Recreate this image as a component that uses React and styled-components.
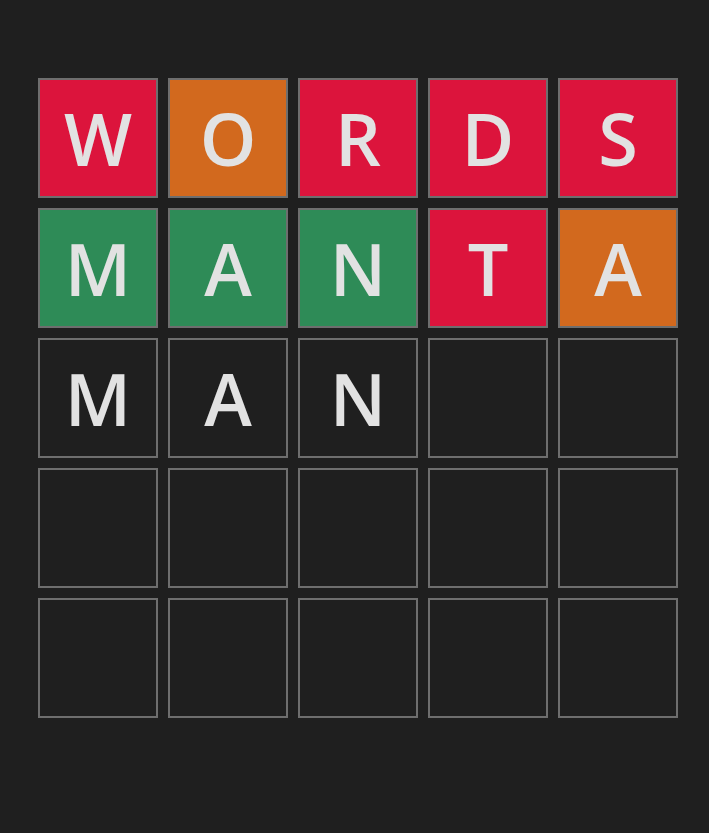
import React from "react";
import styled, { createGlobalStyle } from "styled-components";

const GlobalStyle = createGlobalStyle`
  html, body {
    margin: 0;
    padding: 0;
    background-color: #1f1f1f;
    font-family: "Open Sans", "Liberation Sans", sans-serif;
  }
`;

const rows = [
  [
    { letter: "W", state: "absent" },
    { letter: "O", state: "present" },
    { letter: "R", state: "absent" },
    { letter: "D", state: "absent" },
    { letter: "S", state: "absent" },
  ],
  [
    { letter: "M", state: "correct" },
    { letter: "A", state: "correct" },
    { letter: "N", state: "correct" },
    { letter: "T", state: "absent" },
    { letter: "A", state: "present" },
  ],
  [
    { letter: "M" },
    { letter: "A" },
    { letter: "N" },
    { letter: "" },
    { letter: "" },
  ],
  [{}, {}, {}, {}, {}],
  [{}, {}, {}, {}, {}],
];

const colors = {
  correct: "#2e8b57",
  present: "#d2691e",
  absent: "#dc143c",
};

const App = () => {
  return (
    <Wrapper>
      <GlobalStyle />
      <Board>
        {rows.map((row, i) => (
          <Row key={i}>
            {row.map((tile, j) => (
              <Tile key={j} $state={tile.state}>
                {tile.letter}
              </Tile>
            ))}
          </Row>
        ))}
      </Board>
    </Wrapper>
  );
};

export default App;

const Wrapper = styled.main`
  min-height: 833px;
  padding: 78px 0 0 38px;
  box-sizing: border-box;
`;

const Board = styled.div`
  display: flex;
  flex-direction: column;
  gap: 10px;
`;

const Row = styled.div`
  display: flex;
  gap: 10px;
`;

const Tile = styled.div`
  width: 120px;
  height: 120px;
  box-sizing: border-box;
  border: 2px solid #6e6e6e;
  background-color: ${({ $state }) => colors[$state] || "transparent"};
  color: #e2e2e2;
  display: flex;
  align-items: center;
  justify-content: center;
  font-size: 72px;
  font-weight: 600;
  line-height: 1;
  text-transform: uppercase;
`;
